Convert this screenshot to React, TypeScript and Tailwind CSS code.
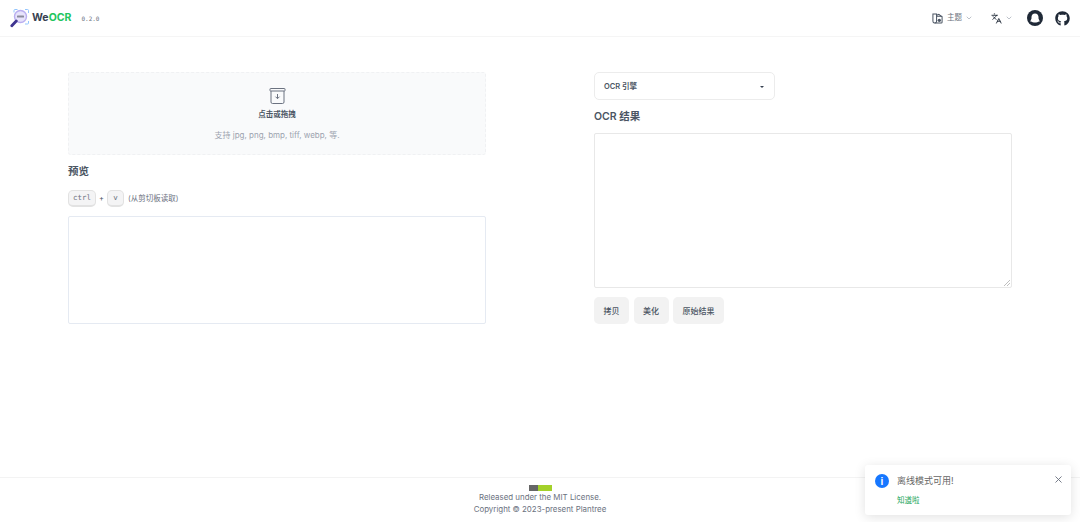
import { ChevronDown, Languages, X } from 'lucide-react';
import { FaGithub } from 'react-icons/fa';

const sans = 'font-["Inter","Noto_Sans_CJK_SC",sans-serif]';

function Logo() {
  return (
    <svg width="19" height="19" viewBox="0 0 19 19" fill="none" className="shrink-0">
      <path d="M4 3.500V1.500A1 1 0 0 1 5 .5h2.500M15 .5h2.500a1 1 0 0 1 1 1V4M18.500 12v2a1 1 0 0 1-1 1H15" stroke="#93c5fd" strokeWidth="1" />
      <circle cx="10.500" cy="7.500" r="6" fill="#e7e3fb" stroke="#b9aef0" strokeWidth="1.400" />
      <rect x="7" y="6.500" width="7" height="2" rx="0.500" fill="#8b8b9e" />
      <path d="M6.300 12 1.800 16.800" stroke="#3f3590" strokeWidth="2.800" strokeLinecap="round" />
    </svg>
  );
}

function ThemeIcon() {
  return (
    <svg width="11" height="11" viewBox="0 0 12 12" fill="none" stroke="#4b5563" strokeWidth="1.100">
      <path d="M1 1h4v8a2 2 0 0 1-4 0z" />
      <path d="M5 2.500 7.500 1.500 10.500 4" />
      <path d="M5 3.500h5.500a.5.500 0 0 1 .5.500v6a1 1 0 0 1-1 1H3" />
      <circle cx="8" cy="8" r="1.800" fill="#4b5563" stroke="none" />
    </svg>
  );
}

function QQIcon() {
  return (
    <svg width="16" height="16" viewBox="0 0 16 16" className="shrink-0">
      <circle cx="8" cy="8" r="8" fill="#1f2937" />
      <path d="M8 3.500c-2.200 0-3.500 1.600-3.500 3.600v1.500L3.300 11.300c.2.500.7.600 1.200.2.500.8 1.800 1 3.500 1s3-.2 3.500-1c.5.400 1 .3 1.200-.2L11.500 8.600V7.100C11.500 5.100 10.200 3.500 8 3.500z" fill="#ffffff" />
    </svg>
  );
}

function ArchiveDown() {
  return (
    <svg width="17" height="16" viewBox="0 0 17 16" fill="none" stroke="#6b7280" strokeWidth="1">
      <rect x="1" y="0.500" width="15" height="2.500" rx="0.500" />
      <path d="M2 3V14a1.500 1.500 0 0 0 1.500 1.500h10A1.500 1.500 0 0 0 15 14V3" />
      <path d="M8.500 6v4.500M6.500 8.700l2 2 2-2" />
    </svg>
  );
}

function Kbd({ children, wide }: { children: string; wide?: boolean }) {
  return (
    <kbd className={`flex h-[17px] items-center justify-center rounded-[5px] border border-b-2 border-[#e2e2e2] bg-[#f4f4f5] font-["DejaVu_Sans_Mono",monospace] text-[7.500px] text-[#6b7280] ${wide ? 'w-[28px]' : 'w-[17px]'}`}>
      {children}
    </kbd>
  );
}

export default function App() {
  return (
    <div className={`relative flex h-[522px] w-[1080px] flex-col overflow-hidden bg-white ${sans}`}>
      {/* Header */}
      <header className="flex h-[37px] shrink-0 items-center justify-between border-b border-[#f5f5f5] pl-[10px] pr-[10px]">
        <div className="flex items-center">
          <Logo />
          <span className="ml-[3px] text-[10.500px] font-bold text-[#374151]">
            We<span className="text-[#22c55e]">OCR</span>
          </span>
          <span className="ml-[10px] font-['DejaVu_Sans_Mono',monospace] text-[6px] text-[#6b7280]">0.2.0</span>
        </div>
        <div className="flex items-center">
          <ThemeIcon />
          <span className="ml-[4px] text-[7.500px] text-[#6b7280]">主题</span>
          <ChevronDown className="ml-[3px] h-[8px] w-[8px] text-[#9ca3af]" />
          <Languages className="ml-[18px] h-[11px] w-[11px] text-[#1f2937]" />
          <ChevronDown className="ml-[3px] h-[8px] w-[8px] text-[#9ca3af]" />
          <span className="ml-[14px]"><QQIcon /></span>
          <FaGithub className="ml-[12px] h-[15px] w-[15px] text-[#1f2937]" />
        </div>
      </header>

      {/* Main */}
      <main className="grid flex-1 grid-cols-[418px_418px] gap-x-[108px] px-[68px] pt-[35px]">
        <section className="flex flex-col">
          <div className="flex h-[83px] flex-col items-center rounded-[3px] border border-dashed border-[#f0f1f3] bg-[#f9fafb] pt-[15px]">
            <ArchiveDown />
            <span className="mt-[5px] text-[7.500px] leading-[11px] font-semibold text-[#4b5563]">点击或拖拽</span>
            <span className="mt-[9px] text-[8px] leading-[12px] text-[#9ca3af]">支持 jpg, png, bmp, tiff, webp, 等.</span>
          </div>
          <h2 className="mt-[10px] text-[10.500px] leading-[14px] font-semibold text-[#4b5563]">预览</h2>
          <div className="mt-[11px] flex items-center">
            <Kbd wide>ctrl</Kbd>
            <span className="mx-[3px] text-[7.500px] text-[#4b5563]">+</span>
            <Kbd>v</Kbd>
            <span className="ml-[4px] text-[7.500px] text-[#6b7280]">(从剪切板读取)</span>
          </div>
          <div className="mt-[9px] h-[108px] rounded-[2px] border border-[#e5eaf2] bg-white" />
        </section>

        <section className="flex flex-col">
          <div className="flex h-[28px] w-[181px] items-center justify-between rounded-[5px] border border-[#ececec] pl-[9px] pr-[10px] pt-[1px]">
            <span className="text-[7.500px] font-semibold text-[#4b5563]">OCR 引擎</span>
            <span className="h-0 w-0 border-x-[2px] border-t-[2px] border-x-transparent border-t-[#374151]" />
          </div>
          <h2 className="mt-[10px] text-[10.500px] leading-[14px] font-semibold text-[#4b5563]">OCR 结果</h2>
          <div className="relative mt-[9px] h-[155px] rounded-[2px] border border-[#e8e8e8] bg-white">
            <svg width="6" height="6" viewBox="0 0 6 6" className="absolute bottom-[1px] right-[1px]" stroke="#a3a3a3" strokeWidth="0.700">
              <path d="M6 0 0 6M6 3 3 6" />
            </svg>
          </div>
          <div className="mt-[9px] flex gap-[4.500px]">
            {['拷贝', '美化', '原始结果'].map((label) => (
              <button key={label} className="flex h-[27px] items-center rounded-[5px] bg-[#f2f2f2] px-[9.500px] text-[8px] font-medium text-[#4b5563]">
                {label}
              </button>
            ))}
          </div>
        </section>
      </main>

      {/* Footer */}
      <footer className="flex h-[45px] shrink-0 flex-col items-center border-t border-[#f3f3f3] pt-[7px] text-[7.900px] leading-[11.500px] text-[#6b7280]">
        <div className="mb-[1px] flex h-[6px] w-[23px] overflow-hidden">
          <span className="w-[9px] bg-[#666666]" />
          <span className="flex-1 bg-[#a3d12a]" />
        </div>
        <p>Released under the MIT License.</p>
        <p>Copyright © 2023-present Plantree</p>
      </footer>

      {/* Toast */}
      <div className="absolute right-[9px] top-[465px] h-[50px] w-[206px] rounded-[3px] bg-white shadow-[0_2px_12px_rgba(0,0,0,0.12)]">
        <div className="flex items-start pl-[10px] pr-[7px] pt-[9px]">
          <span className="flex h-[14px] w-[14px] shrink-0 items-center justify-center rounded-full bg-[#1677ff] font-['Liberation_Sans',sans-serif] text-[10px] font-bold text-white">i</span>
          <span className="ml-[8px] flex-1 text-[9px] leading-[14px] text-[#666666]">离线模式可用!</span>
          <X className="h-[11px] w-[11px] text-[#6b7280]" />
        </div>
        <span className="ml-[32px] mt-[8px] block text-[7.500px] leading-[10px] text-[#22a559]">知道啦</span>
      </div>
    </div>
  );
}
